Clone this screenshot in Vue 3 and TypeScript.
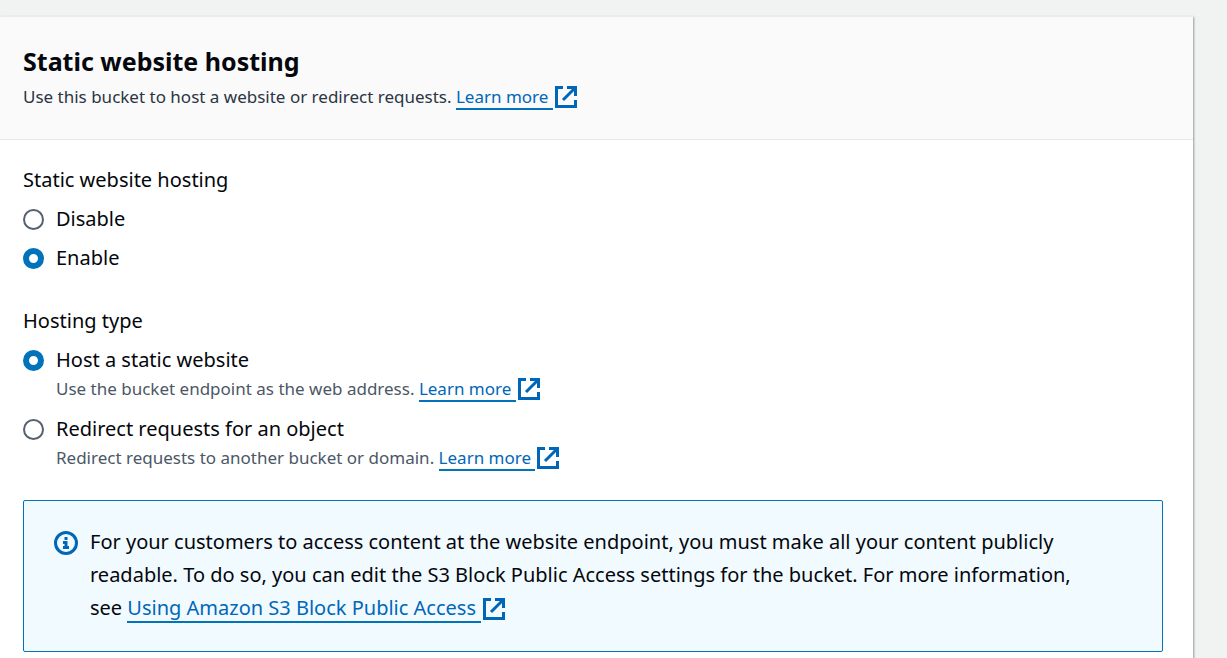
<script setup lang="ts">
import { ref, h } from 'vue'

const hosting = ref('enable')
const hostingType = ref('static')

const ExternalIcon = () =>
  h('svg', { width: 22, height: 22, viewBox: '0 0 22 22', fill: 'none', stroke: 'currentColor', 'stroke-width': 3, 'aria-hidden': 'true' }, [
    h('path', { d: 'M8 1.500H1.500V20.500H20.500V14' }),
    h('path', { d: 'M12 1.500H20.500V10M20 2L8 14' }),
  ])
</script>

<template>
  <main class="page">
    <section class="card">
      <header class="card-header">
        <h2>Static website hosting</h2>
        <p class="description">Use this bucket to host a website or redirect requests. <a class="link" href="#"><span>Learn more&nbsp;</span><ExternalIcon class="ext" /></a></p>
      </header>
      <div class="card-body">
        <fieldset>
          <legend>Static website hosting</legend>
          <label class="option"><input v-model="hosting" type="radio" name="hosting" value="disable" /><span>Disable</span></label>
          <label class="option"><input v-model="hosting" type="radio" name="hosting" value="enable" /><span>Enable</span></label>
        </fieldset>
        <fieldset>
          <legend>Hosting type</legend>
          <label class="option"><input v-model="hostingType" type="radio" name="type" value="static" aria-describedby="hint-static" /><span>Host a static website</span></label>
          <p id="hint-static" class="hint">Use the bucket endpoint as the web address. <a class="link" href="#"><span>Learn more&nbsp;</span><ExternalIcon class="ext" /></a></p>
          <label class="option"><input v-model="hostingType" type="radio" name="type" value="redirect" aria-describedby="hint-redirect" /><span>Redirect requests for an object</span></label>
          <p id="hint-redirect" class="hint">Redirect requests to another bucket or domain. <a class="link" href="#"><span>Learn more&nbsp;</span><ExternalIcon class="ext" /></a></p>
        </fieldset>
        <aside class="notice">
          <svg class="info" width="24" height="24" viewBox="0 0 24 24" fill="none" stroke="currentColor" stroke-width="3" aria-hidden="true">
            <circle cx="12" cy="12" r="10.500" />
            <path d="M10.500 7.500h3M9 11.500h3v5M9 16.500h6" />
          </svg>
          <p>For your customers to access content at the website endpoint, you must make all your content publicly readable. To do so, you can edit the S3 Block Public Access settings for the bucket. For more information, see <a class="link" href="#"><span>Using Amazon S3 Block Public Access&nbsp;</span><ExternalIcon class="ext" /></a></p>
        </aside>
      </div>
    </section>
  </main>
</template>

<style>
body { background: #f1f3f3; }
</style>

<style scoped>
.page { padding: 16px 34px 0 0; font-family: "Noto Sans", "Open Sans", sans-serif; color: #04070c; font-size: 20px; }
.card { background: #fff; border-top: 1px solid #eaeded; box-shadow: 1px 1px 2px rgba(0, 28, 36, 0.4); padding-bottom: 24px; }
.card-header { background: #fafafa; border-bottom: 1px solid #e6e9ea; padding: 24px 23px 27px; }
h2 { margin: 0 0 1px; font-size: 25px; line-height: 40px; font-weight: 700; }
p { margin: 0; }
.description { font-size: 17px; line-height: 30px; color: #2b3543; }
.card-body { padding: 23px 30px 0 23px; }
fieldset { border: 0; margin: 0 0 24px; padding: 0; min-width: 0; }
fieldset:last-of-type { margin-bottom: 19px; }
legend { padding: 0; line-height: 33px; margin-bottom: 6px; }
.option { display: flex; align-items: flex-start; gap: 12px; line-height: 33px; margin-bottom: 6px; }
input { appearance: none; flex: none; box-sizing: border-box; width: 21px; height: 21px; margin: 7px 0 0; border: 2px solid #566170; border-radius: 50%; background: #fff; }
input:checked { border: 6px solid #0073bb; }
.hint { margin: -8px 0 8px 33px; font-size: 17px; line-height: 30px; color: #4b5766; }
.link { color: #0067b8; text-decoration: none; }
.link span { border-bottom: 2px solid #0073bb; }
.ext { vertical-align: -5px; margin-left: 2px; }
.notice { display: flex; gap: 12px; padding: 24px 60px 27px 30px; border: 1px solid #0073bb; border-radius: 2px; background: #f1faff; }
.notice p { line-height: 33px; }
.info { flex: none; margin-top: 6px; color: #0067b8; }
</style>
